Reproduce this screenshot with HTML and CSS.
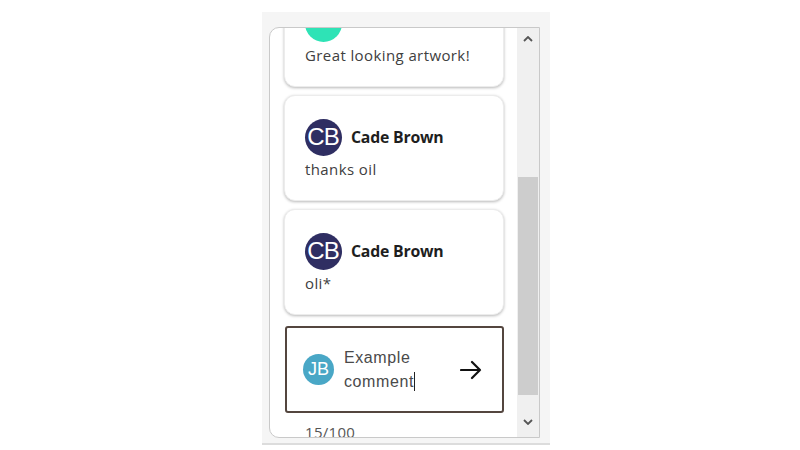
FILE: index.html
```html
<!DOCTYPE html>
<html lang="en">
<head>
<meta charset="utf-8">
<title>Comments</title>
<link rel="stylesheet" href="styles.css">
</head>
<body>
<div class="stage">
  <div class="frame">
    <div class="panel">
      <div class="list">
        <div class="card card-first">
          <div class="card-head">
            <span class="avatar avatar-teal"></span>
          </div>
          <p class="card-text">Great looking artwork!</p>
        </div>
        <div class="card">
          <div class="card-head">
            <span class="avatar avatar-navy">CB</span>
            <span class="name">Cade Brown</span>
          </div>
          <p class="card-text">thanks oil</p>
        </div>
        <div class="card">
          <div class="card-head">
            <span class="avatar avatar-navy">CB</span>
            <span class="name">Cade Brown</span>
          </div>
          <p class="card-text">oli*</p>
        </div>
        <div class="composer">
          <span class="avatar-sm">JB</span>
          <div class="composer-text">Example<br>comment<span class="caret"></span></div>
          <svg class="send" width="22" height="20" viewBox="0 0 22 20" aria-hidden="true">
            <path d="M1 10 H20 M12 2 L20 10 L12 18" fill="none" stroke="#111" stroke-width="2.2" stroke-linecap="round" stroke-linejoin="round"/>
          </svg>
        </div>
        <div class="counter">15/100</div>
      </div>
      <div class="scrollbar">
        <div class="sb-btn">
          <svg width="10" height="6" viewBox="0 0 10 6"><path d="M1 5 L5 1 L9 5" fill="none" stroke="#555" stroke-width="1.8"/></svg>
        </div>
        <div class="sb-gap-top"></div>
        <div class="sb-thumb"></div>
        <div class="sb-gap-bottom"></div>
        <div class="sb-btn">
          <svg width="10" height="6" viewBox="0 0 10 6"><path d="M1 1 L5 5 L9 1" fill="none" stroke="#555" stroke-width="1.8"/></svg>
        </div>
      </div>
    </div>
  </div>
</div>
</body>
</html>
```
FILE: styles.css
```css
* { box-sizing: border-box; }
html, body {
  margin: 0;
  padding: 0;
  background: #ffffff;
}
body {
  width: 800px;
  height: 450px;
  overflow: hidden;
  font-family: "Open Sans", "Noto Sans", sans-serif;
}
.stage {
  padding-top: 12px;
  padding-left: 262px;
}
.frame {
  width: 288px;
  height: 433px;
  background: #f5f5f5;
  border-bottom: 2px solid #dcdcdc;
  padding: 15px 10px 0 7px;
}
.panel {
  width: 271px;
  height: 411px;
  background: #ffffff;
  border: 1px solid #c9c9c9;
  border-radius: 10px 0 0 10px;
  display: flex;
  overflow: hidden;
}
.list {
  flex: 1;
  overflow: hidden;
  display: flex;
  flex-direction: column;
  gap: 8px;
  padding: 0 13px 0 14px;
}
.card {
  flex: none;
  height: 106px;
  background: #fff;
  border: 1px solid #ececec;
  border-radius: 11px;
  box-shadow: 0 1px 3px rgba(0,0,0,0.28);
  padding: 23px 20px 0 20px;
}
.card-first { margin-top: -47px; }
.card-head {
  display: flex;
  align-items: center;
  gap: 9px;
  height: 36px;
}
.avatar {
  width: 37px;
  height: 37px;
  border-radius: 50%;
  flex: none;
  display: flex;
  align-items: center;
  justify-content: center;
  color: #ffffff;
  font-family: "Liberation Sans", Arial, sans-serif;
  font-size: 24px;
  letter-spacing: -1px;
  padding-right: 1px;
}
.avatar-teal { background: #2ee3b6; }
.avatar-navy { background: #2f2e62; }
.name {
  font-weight: 700;
  font-size: 15.8px;
  color: #1e1e1e;
  letter-spacing: -0.2px;
}
.card-text {
  margin: 4px 0 0 0;
  font-size: 15px;
  letter-spacing: 0.4px;
  line-height: 20px;
  color: #404040;
}
.composer {
  flex: none;
  margin-top: 3px;
  width: 219px;
  margin-left: 1px;
  height: 87px;
  border: 2px solid #54463f;
  border-radius: 3px;
  display: flex;
  align-items: center;
  padding: 0 20px 0 16px;
}
.avatar-sm {
  width: 31px;
  height: 31px;
  border-radius: 50%;
  background: #49a7c6;
  color: #ffffff;
  display: flex;
  align-items: center;
  justify-content: center;
  font-family: "Liberation Sans", Arial, sans-serif;
  font-size: 18px;
  flex: none;
}
.composer-text {
  flex: 1;
  margin-left: 10px;
  font-family: "Liberation Sans", Arial, sans-serif;
  font-size: 16px;
  letter-spacing: 0.6px;
  line-height: 24px;
  color: #4a4a4a;
}
.caret {
  display: inline-block;
  width: 1px;
  height: 19px;
  background: #222;
  vertical-align: -4px;
}
.send { flex: none; }
.counter {
  flex: none;
  padding-left: 21px;
  margin-top: 1px;
  font-size: 15px;
  letter-spacing: 0.3px;
  color: #555;
  line-height: 20px;
}
.scrollbar {
  width: 22px;
  flex: none;
  background: #f0f0f0;
  display: flex;
  flex-direction: column;
  padding-bottom: 5px;
}
.sb-btn {
  height: 21px;
  display: flex;
  align-items: center;
  justify-content: center;
  flex: none;
}
.sb-gap-top { height: 128px; flex: none; }
.sb-thumb {
  height: 218px;
  background: #cdcdcd;
  flex: none;
  margin: 0 1px;
}
.sb-gap-bottom { flex: 1; }
```
